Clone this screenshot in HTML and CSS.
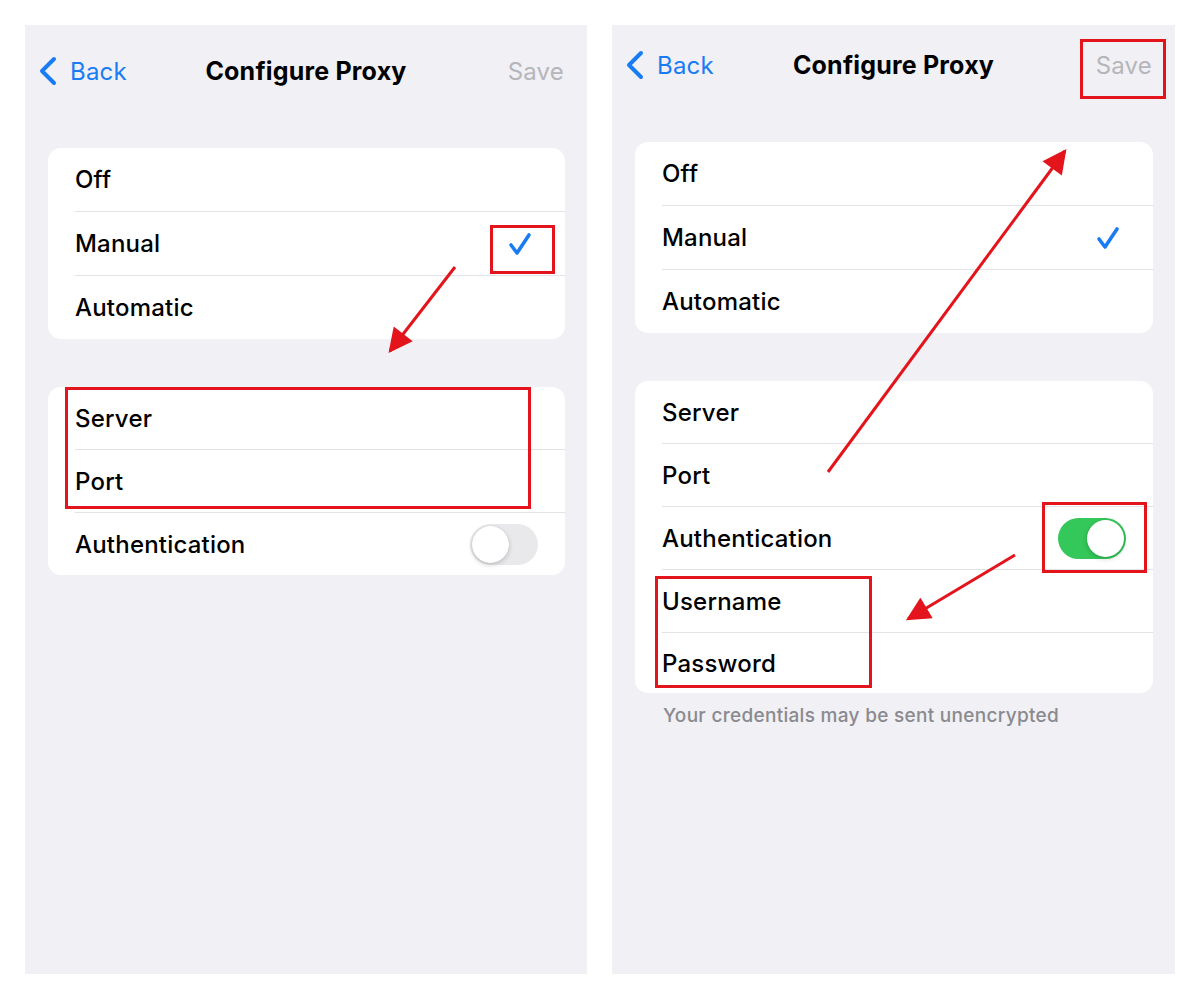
FILE: index.html
```html
<!DOCTYPE html>
<html lang="en">
<head>
<meta charset="utf-8">
<title>Configure Proxy</title>
<link rel="stylesheet" href="styles.css">
</head>
<body>
<div class="page">
  <section class="screen screen-left">
    <header class="nav">
      <div class="nav-back">
        <svg class="chev" width="20" height="30" viewBox="0 0 20 30"><path d="M16 3 L4 15 L16 27" fill="none" stroke="#1a7cf5" stroke-width="4" stroke-linecap="round" stroke-linejoin="round"/></svg>
        <span>Back</span>
      </div>
      <div class="nav-title">Configure Proxy</div>
      <div class="nav-save">Save</div>
    </header>

    <div class="card card-first">
      <div class="row">Off</div>
      <div class="row"><span>Manual</span>
        <svg class="check" width="24" height="24" viewBox="0 0 24 24"><path d="M3 13 L9 21 L21 3" fill="none" stroke="#1a7cf5" stroke-width="3.6" stroke-linecap="round" stroke-linejoin="round"/></svg>
      </div>
      <div class="row">Automatic</div>
    </div>

    <div class="card card-second">
      <div class="row row-s">Server</div>
      <div class="row row-s">Port</div>
      <div class="row row-s"><span>Authentication</span><span class="toggle"><span class="knob"></span></span></div>
    </div>
  </section>

  <section class="screen screen-right">
    <header class="nav">
      <div class="nav-back">
        <svg class="chev" width="20" height="30" viewBox="0 0 20 30"><path d="M16 3 L4 15 L16 27" fill="none" stroke="#1a7cf5" stroke-width="4" stroke-linecap="round" stroke-linejoin="round"/></svg>
        <span>Back</span>
      </div>
      <div class="nav-title">Configure Proxy</div>
      <div class="nav-save">Save</div>
    </header>

    <div class="card card-first">
      <div class="row">Off</div>
      <div class="row"><span>Manual</span>
        <svg class="check" width="24" height="24" viewBox="0 0 24 24"><path d="M3 13 L9 21 L21 3" fill="none" stroke="#1a7cf5" stroke-width="3.6" stroke-linecap="round" stroke-linejoin="round"/></svg>
      </div>
      <div class="row">Automatic</div>
    </div>

    <div class="card card-second">
      <div class="row row-s">Server</div>
      <div class="row row-s">Port</div>
      <div class="row row-s"><span>Authentication</span><span class="toggle toggle-on"><span class="knob"></span></span></div>
      <div class="row row-s">Username</div>
      <div class="row row-s row-last">Password</div>
    </div>
    <p class="footnote">Your credentials may be sent unencrypted</p>
  </section>

  <svg class="annot" width="1200" height="1000" viewBox="0 0 1200 1000">
    <defs>
      <marker id="ah" viewBox="0 0 10 10" refX="9" refY="5" markerWidth="26" markerHeight="24" markerUnits="userSpaceOnUse" orient="auto">
        <path d="M0 0 L10 5 L0 10 z" fill="#e3141b"/>
      </marker>
    </defs>
    <g fill="none" stroke="#e3141b" stroke-width="3">
      <rect x="491.5" y="226.5" width="62" height="46"/>
      <rect x="66.5" y="388.5" width="463" height="119"/>
      <rect x="1081.5" y="40.5" width="83" height="57"/>
      <rect x="1043.5" y="503.5" width="102" height="68"/>
      <rect x="656.5" y="577.5" width="214" height="109"/>
      <line x1="455" y1="267" x2="390" y2="351" marker-end="url(#ah)"/>
      <line x1="828" y1="472" x2="1065" y2="151" marker-end="url(#ah)"/>
      <line x1="1015" y1="555" x2="908" y2="619" marker-end="url(#ah)"/>
    </g>
  </svg>
</div>
</body>
</html>
```

FILE: styles.css
```css
* { box-sizing: border-box; }

html, body {
  margin: 0;
  padding: 0;
  background: #ffffff;
}

body {
  font-family: "Inter", "Roboto", "Liberation Sans", sans-serif;
  color: #000;
  -webkit-font-smoothing: antialiased;
}

.page {
  position: relative;
  width: 1200px;
  height: 1000px;
  display: flex;
  gap: 25px;
  padding: 25px 0 0 25px;
}

.screen {
  width: 562px;
  height: 949px;
  background: #f0f0f5;
  display: flex;
  flex-direction: column;
  padding-top: 24px;
}

.screen-right {
  width: 563px;
  padding-top: 18px;
}

.nav {
  height: 44px;
  display: grid;
  grid-template-columns: 1fr auto 1fr;
  align-items: center;
  padding: 0 23px;
  font-size: 24px;
  letter-spacing: 0.2px;
}

.nav-back {
  display: flex;
  align-items: center;
  margin-left: -10px;
  color: #1a7cf5;
}

.chev {
  margin-right: 12px;
}

.nav-title {
  font-size: 25px;
  font-weight: 700;
  letter-spacing: 0.2px;
}

.nav-save {
  justify-self: end;
  color: #b6b6ba;
}

.card {
  background: #ffffff;
  border-radius: 13px;
  margin: 0 22px 0 23px;
  overflow: hidden;
}

.card-first {
  margin-top: 55px;
}

.card-second {
  margin-top: 48px;
}

.row {
  height: 63px;
  margin-left: 27px;
  padding-right: 27px;
  display: flex;
  align-items: center;
  justify-content: space-between;
  font-size: 24px;
  font-weight: 500;
  letter-spacing: 0.2px;
}

.row + .row {
  height: 64px;
  border-top: 1px solid #e3e3e7;
}

.row-s {
  height: 62px;
}

.row-s + .row-s {
  height: 63px;
}

.row-s.row-last {
  height: 61px;
}

.check {
  margin-right: 6px;
}

.toggle {
  position: relative;
  width: 68px;
  height: 41px;
  border-radius: 21px;
  background: #e9e9ec;
  display: flex;
  align-items: center;
  padding: 2px;
}

.knob {
  width: 37px;
  height: 37px;
  border-radius: 50%;
  background: #ffffff;
  box-shadow: 0 2px 5px rgba(0, 0, 0, 0.18), 0 0 1px rgba(0, 0, 0, 0.15);
}

.toggle-on {
  background: #34c759;
  justify-content: flex-end;
}

.footnote {
  margin: 11px 0 0 51px;
  font-size: 19px;
  font-weight: 500;
  letter-spacing: 0.3px;
  color: #8a8a8e;
}

.annot {
  position: absolute;
  left: 0;
  top: 0;
  pointer-events: none;
}
```
